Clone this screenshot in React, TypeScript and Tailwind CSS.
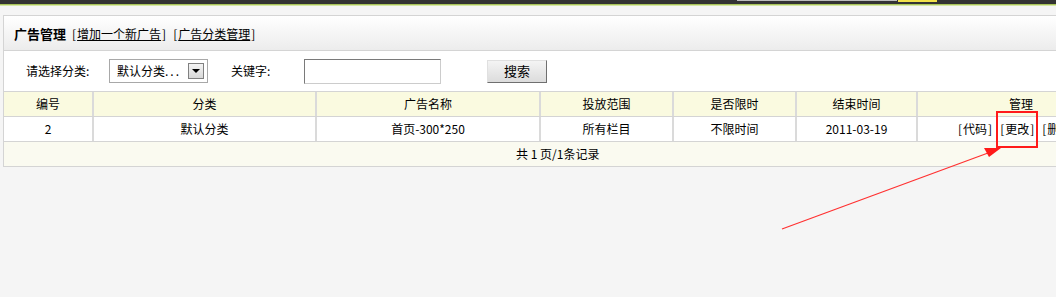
const cols = [
  { title: '编号', w: 'w-[90px]' },
  { title: '分类', w: 'w-[223px]' },
  { title: '广告名称', w: 'w-[224px]' },
  { title: '投放范围', w: 'w-[133px]' },
  { title: '是否限时', w: 'w-[123px]' },
  { title: '结束时间', w: 'w-[121px]' },
  { title: '管理', w: 'w-[206px]' },
]

const row = ['2', '默认分类', '首页-300*250', '所有栏目', '不限时间', '2011-03-19']

function TopBar() {
  return (
    <div>
      <div className="flex h-[4px] bg-[#333333]">
        <div className="ml-[737px] h-[1px] w-[160px] bg-[#bdbdbd]" />
        <div className="ml-[1px] h-[2px] w-[39px] bg-[#f2e14a]" />
      </div>
      <div className="h-[1px] bg-[#a9c45a]" />
      <div className="h-[1px] bg-[#d6e6a8]" />
    </div>
  )
}

function Bracketed({ text, link }: { text: string; link?: boolean }) {
  return (
    <span className="whitespace-nowrap">
      <span className="px-[1px]">[</span>
      <span className={link ? 'underline' : ''}>{text}</span>
      <span className="px-[1px]">]</span>
    </span>
  )
}

export default function App() {
  return (
    <div
      className="relative h-[297px] w-[1056px] overflow-hidden bg-[#f5f5f5] text-[12px] text-black"
      style={{ fontFamily: '"Noto Sans CJK SC", "DejaVu Sans", sans-serif' }}
    >
      <TopBar />
      <div className="h-[9px]" />

      <div className="ml-[3px] w-[1130px] border border-[#d4d4d4] bg-white">
        <div className="flex h-[34px] items-center bg-gradient-to-b from-white to-[#ececec] pl-[10px] pt-[1px]">
          <span className="mr-[5px] text-[13px] font-bold">广告管理</span>
          <Bracketed text="增加一个新广告" link />
          <span className="w-[5px]" />
          <Bracketed text="广告分类管理" link />
        </div>

        <div className="flex h-[41px] items-center border-t border-[#d4d4d4] pl-[22px]">
          <span className="w-[83px]">请选择分类:</span>
          <div className="flex h-[24px] w-[99px] items-center justify-between border border-[#a8a8a8] pl-[7px] pr-[3px]">
            <span>
              默认分类<span className="tracking-[2px]">...</span>
            </span>
            <span className="flex h-[16px] w-[16px] items-center justify-center border border-[#808080] bg-gradient-to-b from-[#f4f4f4] to-[#d8d8d8]">
              <span className="h-0 w-0 border-x-[4px] border-t-[4px] border-x-transparent border-t-black" />
            </span>
          </div>
          <span className="ml-[23px] w-[73px]">关键字:</span>
          <div className="h-[25px] w-[137px] border border-[#cccccc] border-l-[#7a7a7a] border-t-[#7a7a7a] bg-white" />
          <button className="ml-[46px] flex h-[23px] w-[60px] items-center justify-center border border-[#e0e0e0] border-b-[#6f6f6f] border-r-[#6f6f6f] bg-gradient-to-b from-[#f4f4f4] to-[#dcdcdc] text-[13px]">
            搜索
          </button>
        </div>

        <div className="flex h-[25px] border-t border-[#d4d4d4] bg-[#fafae0]">
          {cols.map((c, i) => (
            <div
              key={c.title}
              className={`${c.w} flex items-center justify-center ${i < cols.length - 1 ? 'border-r-2 border-[#dadada]' : ''}`}
            >
              {c.title}
            </div>
          ))}
        </div>

        <div className="flex h-[25px] border-t border-[#d4d4d4] bg-white">
          {row.map((v, i) => (
            <div
              key={i}
              className={`${cols[i].w} flex items-center justify-center border-r-2 border-[#dadada]`}
            >
              {v}
            </div>
          ))}
          <div className="flex w-[206px] items-center gap-[6px] pl-[39px]">
            <Bracketed text="代码" />
            <Bracketed text="更改" />
            <Bracketed text="删除" />
          </div>
        </div>

        <div className="flex h-[25px] items-center border-t border-[#d4d4d4] bg-[#fafaf0] pl-[512px]">
          <span className="whitespace-pre">共 1 页/1条记录</span>
        </div>
      </div>

      <svg className="pointer-events-none absolute left-0 top-0" width="1056" height="297">
        <rect x="997" y="112" width="40" height="35" fill="none" stroke="#ff1a1a" strokeWidth="2" />
        <line x1="782" y1="229" x2="988" y2="153" stroke="#ff3030" strokeWidth="1.2" />
        <polygon points="1001,148 984,148 989,157" fill="#ff1a1a" />
      </svg>
    </div>
  )
}
